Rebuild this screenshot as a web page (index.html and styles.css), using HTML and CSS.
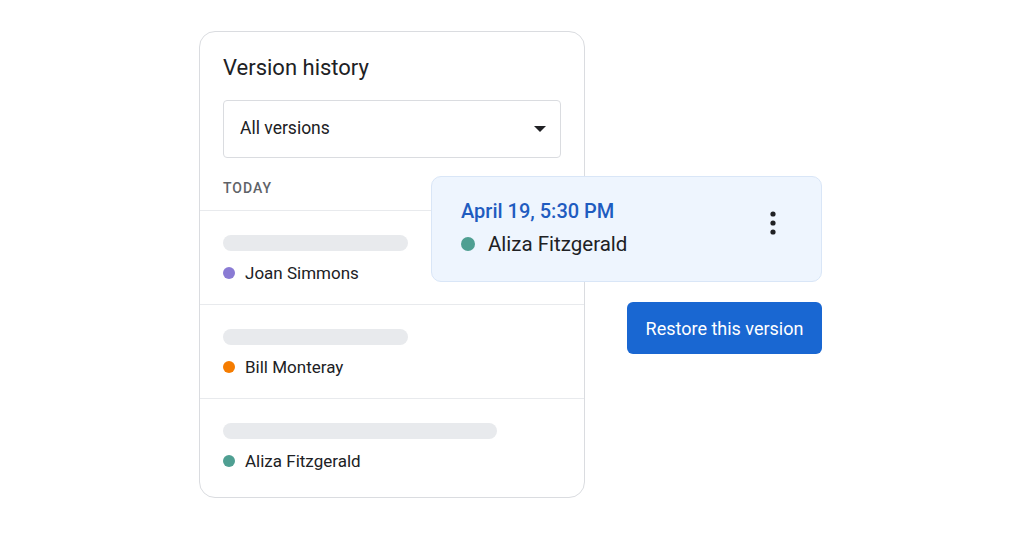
FILE: index.html
```html
<!DOCTYPE html>
<html lang="en">
<head>
<meta charset="utf-8">
<title>Version history</title>
<link rel="stylesheet" href="styles.css">
</head>
<body>
<div class="stage">
  <section class="panel">
    <h1 class="panel-title">Version history</h1>
    <div class="select">
      <span>All versions</span>
      <svg class="caret" width="12" height="6" viewBox="0 0 12 6"><path d="M0 0h12L6 6z" fill="#202124"/></svg>
    </div>
    <div class="section-label">TODAY</div>
    <ul class="versions">
      <li class="version">
        <div class="skeleton" style="width:185px"></div>
        <div class="author"><span class="dot purple"></span>Joan Simmons</div>
      </li>
      <li class="version">
        <div class="skeleton" style="width:185px"></div>
        <div class="author"><span class="dot orange"></span>Bill Monteray</div>
      </li>
      <li class="version">
        <div class="skeleton" style="width:274px"></div>
        <div class="author"><span class="dot teal"></span>Aliza Fitzgerald</div>
      </li>
    </ul>
  </section>
  <div class="popup">
    <div class="popup-card">
      <div class="popup-text">
        <div class="popup-date">April 19, 5:30 PM</div>
        <div class="popup-author"><span class="dot big teal"></span>Aliza Fitzgerald</div>
      </div>
      <svg class="kebab" width="6" height="24" viewBox="0 0 6 24"><circle cx="3" cy="3" r="2.6" fill="#202124"/><circle cx="3" cy="12" r="2.6" fill="#202124"/><circle cx="3" cy="21" r="2.6" fill="#202124"/></svg>
    </div>
    <button class="restore">Restore this version</button>
  </div>
</div>
</body>
</html>
```
FILE: styles.css
```css
* { box-sizing: border-box; }
html, body { margin: 0; padding: 0; background: #fff; }
body {
  font-family: Roboto, "Liberation Sans", Arial, sans-serif;
  color: #202124;
  width: 1024px;
  height: 536px;
  overflow: hidden;
}
.stage {
  position: relative;
  padding: 31px 0 0 199px;
}
.panel {
  width: 386px;
  height: 467px;
  border: 1px solid #dadce0;
  border-radius: 16px;
  background: #fff;
  overflow: hidden;
}
.panel-title {
  margin: 0;
  padding: 22px 0 0 23px;
  font-size: 22px;
  font-weight: 400;
  line-height: 28px;
  color: #202124;
}
.select {
  margin: 18px 23px 0 23px;
  height: 58px;
  border: 1px solid #dadce0;
  border-radius: 4px;
  display: flex;
  align-items: center;
  justify-content: space-between;
  padding: 0 14px 2px 16px;
  font-size: 17.5px;
}
.caret { display: block; margin-top: 2px; }
.section-label {
  padding: 22px 0 0 23px;
  height: 52px;
  font-size: 14px;
  font-weight: 500;
  letter-spacing: 1px;
  color: #5f6368;
}
.versions { list-style: none; margin: 0; padding: 0; }
.version {
  border-top: 1px solid #e8eaed;
  height: 94px;
  padding: 24px 0 0 23px;
}
.skeleton {
  height: 16px;
  border-radius: 8px;
  background: #e8eaed;
}
.author {
  display: flex;
  align-items: center;
  margin-top: 12px;
  font-size: 17px;
  line-height: 20px;
}
.dot {
  width: 12px;
  height: 12px;
  border-radius: 50%;
  margin-right: 10px;
  flex: none;
}
.dot.big { width: 14px; height: 14px; margin-right: 13px; }
.purple { background: #8a7bd4; }
.orange { background: #f57c00; }
.teal { background: #4f9f92; }
.popup {
  position: absolute;
  left: 431px;
  top: 176px;
  width: 391px;
  display: flex;
  flex-direction: column;
  align-items: flex-end;
}
.popup-card {
  width: 100%;
  height: 106px;
  background: #eef5fe;
  border: 1px solid #d9e6f7;
  border-radius: 10px;
  display: flex;
  align-items: flex-start;
  justify-content: space-between;
  padding: 22px 45px 0 29px;
}
.popup-date {
  font-size: 20px;
  font-weight: 500;
  color: #1f5cc0;
  line-height: 24px;
}
.popup-author {
  display: flex;
  align-items: center;
  margin-top: 9px;
  font-size: 20.5px;
  line-height: 24px;
  color: #202124;
}
.kebab { margin-top: 12px; display: block; }
.restore {
  margin-top: 20px;
  width: 195px;
  height: 52px;
  background: #1967d2;
  color: #fff;
  border: none;
  border-radius: 6px;
  font-family: inherit;
  font-size: 18px;
  font-weight: 400;
  padding: 0;
}
```
